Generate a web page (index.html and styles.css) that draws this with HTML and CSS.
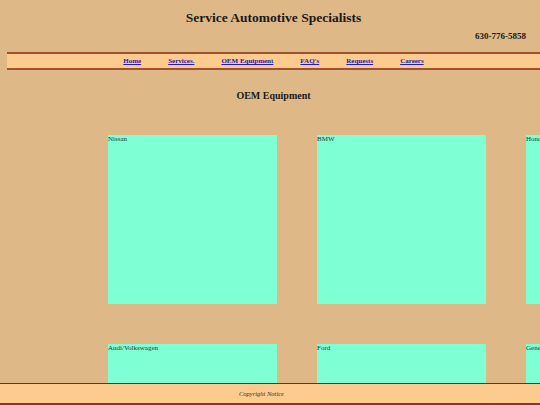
FILE: index.html
```html
<!DOCTYPE html>
<html lang="en">
<head>
    <meta charset="UTF-8">
    <meta name="viewport" content="width=device-width, initial-scale=1.0">
    <title>Service Automotive Specialists - OEM Equipment</title>
    <link rel="stylesheet" href="styles.css">
</head>
<body>
    <div class="page">
        <header>
            <h1>Service Automotive Specialists</h1>
            <p class="phone">630-776-5858</p>
        </header>

        <nav class="menu">
            <a href="#">Home</a>
            <a href="#">Services.</a>
            <a href="#">OEM Equipment</a>
            <a href="#">FAQ's</a>
            <a href="#">Requests</a>
            <a href="#">Careers</a>
        </nav>

        <h2>OEM Equipment</h2>

        <div class="makes">
            <div class="make">Nissan</div>
            <div class="make">BMW</div>
            <div class="make">Honda</div>
            <div class="make">Audi/Volkswagen</div>
            <div class="make">Ford</div>
            <div class="make">General Motors</div>
        </div>
    </div>

    <footer>
        <p>Copyright Notice</p>
    </footer>
</body>
</html>
```

FILE: styles.css
```css
body {
    font-family: "Liberation Serif", "Times New Roman", serif;
    background-color: #deb887;
    color: #1a1a1a;
    margin: 0;
    padding: 0;
    overflow: hidden;
}
.page {
    margin-left: 7px;
}
header h1 {
    font-size: 13.5px;
    line-height: 16px;
    text-align: center;
    margin: 0;
    padding-top: 10px;
}
.phone {
    font-size: 9px;
    line-height: 11px;
    font-weight: bold;
    text-align: right;
    margin: 5px 14px 0 0;
}
.menu {
    margin-top: 10px;
    background-color: #fdcb8d;
    border-top: 2px solid #a0522d;
    border-bottom: 2px solid #a0522d;
    height: 14px;
    display: flex;
    justify-content: center;
    align-items: center;
    gap: 27px;
}
.menu a {
    font-size: 7px;
    line-height: 14px;
    font-weight: bold;
    color: #2020c0;
}
h2 {
    font-size: 10px;
    line-height: 12px;
    text-align: center;
    margin: 20px 0 33px;
}
.makes {
    margin-left: 101px;
    display: grid;
    grid-template-columns: repeat(3, 169px);
    gap: 40px;
}
.make {
    background-color: #7fffd4;
    height: 169px;
    font-size: 7px;
    line-height: 9px;
    color: #1f3a30;
}
footer {
    position: fixed;
    left: 0;
    right: 0;
    bottom: 0;
    height: 19px;
    background-color: #fdcb8d;
    border-top: 1px solid #7a2a1a;
    border-bottom: 2px solid #b22222;
    text-align: center;
}
footer p {
    margin: 0;
    padding-right: 17px;
    font-size: 6.5px;
    line-height: 19px;
    font-style: italic;
    color: #333;
}
```
